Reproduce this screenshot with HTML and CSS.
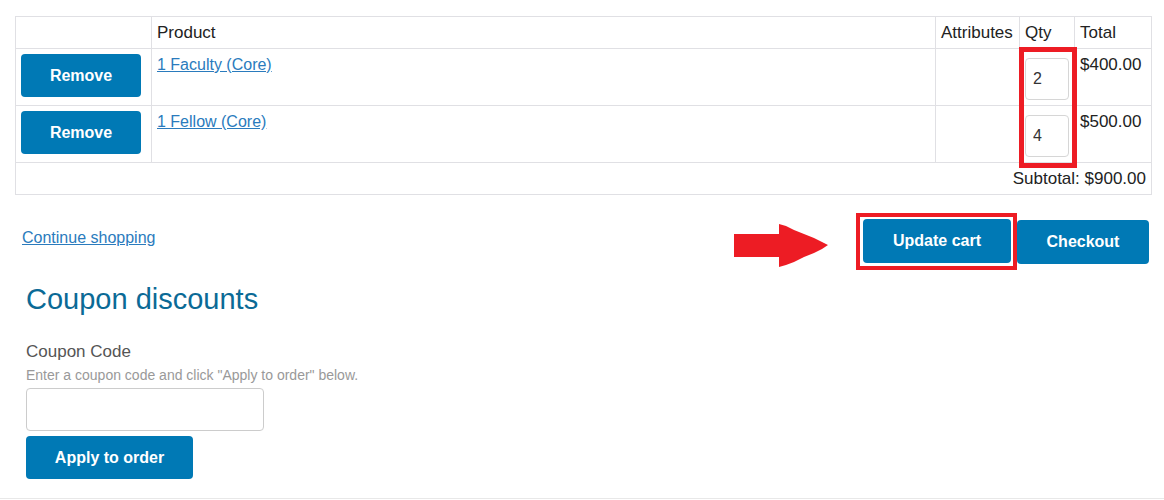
FILE: index.html
```html
<!DOCTYPE html>
<html lang="en">
<head>
    <meta charset="UTF-8">
    <meta name="viewport" content="width=device-width, initial-scale=1.0">
    <title>Shopping cart</title>
    <link rel="stylesheet" href="styles.css">
</head>
<body>
    <div class="page">
        <div class="cart-wrap">
            <table class="cart">
                <thead>
                    <tr>
                        <th class="col-remove"></th>
                        <th class="col-product">Product</th>
                        <th class="col-attr">Attributes</th>
                        <th class="col-qty">Qty</th>
                        <th class="col-total">Total</th>
                    </tr>
                </thead>
                <tbody>
                    <tr>
                        <td><button class="btn btn-remove">Remove</button></td>
                        <td><a href="#" class="link">1 Faculty (Core)</a></td>
                        <td></td>
                        <td><input class="qty" type="text" value="2"></td>
                        <td>$400.00</td>
                    </tr>
                    <tr>
                        <td><button class="btn btn-remove">Remove</button></td>
                        <td><a href="#" class="link">1 Fellow (Core)</a></td>
                        <td></td>
                        <td><input class="qty" type="text" value="4"></td>
                        <td>$500.00</td>
                    </tr>
                    <tr>
                        <td colspan="5" class="subtotal">Subtotal: $900.00</td>
                    </tr>
                </tbody>
            </table>
            <!-- annotation box around the qty column -->
            <div class="mark-qty"></div>
        </div>

        <div class="actions">
            <a href="#" class="link continue">Continue shopping</a>
            <div class="action-buttons">
                <svg class="arrow" width="95" height="44" viewBox="0 0 95 44">
                    <path d="M0 10 H45 V0 L52 2 L60 6 L70 10 L80 14 L88 18 L94 21 L88 25 L80 29 L70 33 L60 38 L52 41 L45 43 V33 H0 Z" fill="#ed1c24"/>
                </svg>
                <span class="mark-update">
                    <button class="btn btn-update">Update cart</button>
                </span>
                <button class="btn btn-checkout">Checkout</button>
            </div>
        </div>

        <div class="coupon">
            <h2>Coupon discounts</h2>
            <label class="coupon-label">Coupon Code</label>
            <p class="hint">Enter a coupon code and click "Apply to order" below.</p>
            <input class="coupon-input" type="text">
            <button class="btn btn-apply">Apply to order</button>
        </div>
    </div>
    <div class="footer-line"></div>
</body>
</html>
```

FILE: styles.css
```css
body {
    margin: 0;
    font-family: "Liberation Sans", Arial, sans-serif;
    color: #222;
    background: #fff;
}
.page {
    padding: 16px 12px 19px 15px;
}
.cart-wrap { position: relative; }
.cart {
    width: 1137px;
    border-collapse: collapse;
    table-layout: fixed;
    font-size: 17px;
}
.cart th, .cart td {
    border: 1px solid #e0e0e4;
    padding: 5px;
    line-height: 21px;
    text-align: left;
    vertical-align: top;
    font-weight: normal;
}
.col-remove { width: 125px; }
.col-attr { width: 73px; }
.col-qty { width: 44px; }
.col-total { width: 66px; }
.cart td.subtotal { text-align: right; }

.link {
    color: #2a7bbd;
    font-size: 16px;
    text-decoration: underline;
}
.continue { margin-bottom: 8px; }
.btn {
    background: #0079b5;
    color: #fff;
    border: none;
    border-radius: 4px;
    font-family: "Liberation Sans", Arial, sans-serif;
    font-weight: bold;
    font-size: 16px;
    height: 44px;
    padding: 0;
    white-space: nowrap;
    cursor: pointer;
}
.btn-remove {
    width: 120px;
    height: 43px;
    display: block;
}
.qty {
    display: block;
    box-sizing: border-box;
    width: 44px;
    height: 42px;
    margin-top: 4px;
    border: 1px solid #d6d6d6;
    border-radius: 4px;
    padding: 0 7px;
    font-size: 16px;
    font-family: "Liberation Sans", Arial, sans-serif;
    color: #333;
}
.mark-qty {
    position: absolute;
    left: 1004px;
    top: 31px;
    width: 48px;
    height: 111px;
    border: 5px solid #ed1c24;
}

.actions {
    display: flex;
    align-items: center;
    justify-content: space-between;
    margin-top: 18px;
    padding-left: 7px;
    margin-right: 3px;
}
.action-buttons {
    display: flex;
    align-items: center;
}
.arrow {
    margin-top: 4px;
    margin-bottom: -4px;
    margin-right: 27px;
}
.mark-update {
    display: flex;
    border: 4px solid #ed1c24;
    padding: 2px 2px 3px 3px;
}
.btn-update { width: 148px; }
.btn-checkout { width: 132px; }

.coupon {
    padding-left: 11px;
    margin-top: 12px;
}
.coupon h2 {
    margin: 0;
    font-size: 29px;
    line-height: 34px;
    font-weight: normal;
    color: #0b6a96;
}
.coupon-label {
    display: block;
    margin-top: 25px;
    font-size: 17px;
    line-height: 22px;
    color: #555;
}
.hint {
    margin: 3px 0 4px;
    font-size: 14px;
    line-height: 18px;
    color: #999;
}
.coupon-input {
    display: block;
    box-sizing: border-box;
    width: 238px;
    height: 43px;
    border: 1px solid #ccc;
    border-radius: 4px;
}
.btn-apply {
    display: block;
    margin-top: 5px;
    width: 167px;
    height: 43px;
}
.footer-line {
    border-top: 1px solid #e8e8e8;
}
```
